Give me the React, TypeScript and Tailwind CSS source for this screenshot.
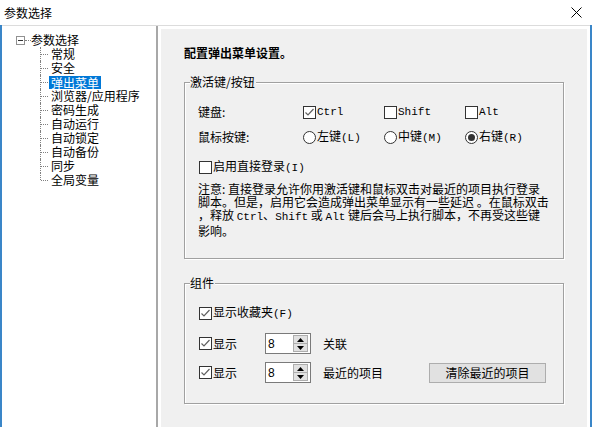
import React from "react";

const TREE_ITEMS = [
  "常规",
  "安全",
  "弹出菜单",
  "浏览器/应用程序",
  "密码生成",
  "自动运行",
  "自动锁定",
  "自动备份",
  "同步",
  "全局变量",
];

const MONO = "font-['Liberation_Mono'] text-[11px]";

function Check({ checked }: { checked?: boolean }) {
  return (
    <span className="flex h-[13px] w-[13px] shrink-0 items-center justify-center border border-[#333333] bg-white">
      {checked && (
        <svg width="11" height="11" viewBox="0 0 11 11">
          <path d="M1.5 5.5 L4 8 L9.5 2" stroke="#606060" strokeWidth="1.2" fill="none" />
        </svg>
      )}
    </span>
  );
}

function Radio({ on }: { on?: boolean }) {
  return (
    <span className="flex h-[13px] w-[13px] shrink-0 items-center justify-center rounded-full border border-[#333333] bg-white">
      {on && <span className="h-[7px] w-[7px] rounded-full bg-[#333333]" />}
    </span>
  );
}

function Spin({ value }: { value: string }) {
  return (
    <div className="flex h-[21px] w-[46px] items-center border border-[#7a7a7a] bg-white">
      <span className="flex-1 pl-[2px] font-['Liberation_Sans'] text-[12px] leading-[14px]">{value}</span>
      <div className="mr-[2px] flex h-[17px] w-[15px] flex-col">
        <div className="flex flex-1 items-center justify-center border border-[#adadad] bg-[#e1e1e1]">
          <svg width="7" height="4" viewBox="0 0 7 4">
            <path d="M0 4 L3.5 0 L7 4 Z" fill="#000" />
          </svg>
        </div>
        <div className="flex flex-1 items-center justify-center border border-t-0 border-[#adadad] bg-[#e1e1e1]">
          <svg width="7" height="4" viewBox="0 0 7 4">
            <path d="M0 0 L3.5 4 L7 0 Z" fill="#000" />
          </svg>
        </div>
      </div>
    </div>
  );
}

function Tree() {
  return (
    <div className="w-[156px] shrink-0 border-r-2 border-[#a8a8a8] bg-white pl-[14px] pt-[7px]">
      <div className="flex h-[14px] items-center">
        <span className="flex h-[9px] w-[9px] items-center justify-center border border-[#919191] bg-white">
          <span className="h-px w-[5px] bg-[#333]" />
        </span>
        <span className="w-[6px] border-t border-dotted border-[#808080]" />
        <span className="text-[12px] leading-[14px]">参数选择</span>
      </div>
      <div className="ml-[24px]">
        {TREE_ITEMS.map((t, i) => {
          const last = i === TREE_ITEMS.length - 1;
          return (
            <div key={t} className="flex h-[14px] items-center">
              <div className="relative h-[14px] w-[9px] shrink-0">
                <span
                  className={
                    last
                      ? "absolute left-0 top-0 h-[7px] border-l border-dotted border-[#808080]"
                      : "absolute left-0 top-0 h-[14px] border-l border-dotted border-[#808080]"
                  }
                />
                <span className="absolute left-[1px] top-[7px] w-[7px] border-t border-dotted border-[#808080]" />
              </div>
              <span
                className={
                  t === "弹出菜单"
                    ? "bg-[#0078d7] px-[2px] text-[12px] leading-[13px] text-white"
                    : "px-[2px] text-[12px] leading-[14px]"
                }
              >
                {t}
              </span>
            </div>
          );
        })}
      </div>
    </div>
  );
}

function GroupBox({ title, className, children }: { title: string; className: string; children: React.ReactNode }) {
  return (
    <div className={"relative border border-[#a0a0a0] shadow-[inset_1px_1px_0_#ffffff,1px_1px_0_#ffffff] " + className}>
      <span className="absolute -top-[8px] left-[5px] bg-[#f0f0f0] pr-[1px] text-[12px] leading-[14px]">{title}</span>
      {children}
    </div>
  );
}

export default function App() {
  return (
    <div className="h-[444px] w-[592px] overflow-hidden bg-white font-['Noto_Sans_CJK_SC',sans-serif] text-black">
      {/* title bar */}
      <div className="flex h-[25px] items-center justify-between pl-[4px] pr-[10px]">
        <span className="text-[12px] leading-[14px]">参数选择</span>
        <svg width="11" height="11" viewBox="0 0 11 11">
          <path d="M0.5 0.5 L10.5 10.5 M10.5 0.5 L0.5 10.5" stroke="#000" strokeWidth="1" />
        </svg>
      </div>

      <div className="flex h-[402px] flex-col border-x-2 border-[#3a86c8]">
        <div className="flex flex-1 border-t border-[#dcdcdc]">
          <Tree />
          <div className="ml-[3px] mt-[3px] flex w-[426px] flex-col bg-[#f0f0f0] px-[23px] pt-[17px]">
            <div className="text-[12px] font-bold leading-[14px]">配置弹出菜单设置。</div>

            <GroupBox title="激活键/按钮" className="mt-[22px] h-[177px] pl-[13px] pt-[22px]">
              <div className="flex h-[14px] items-center text-[12px] leading-[14px]">
                <span className="w-[105px]">键盘:</span>
                <span className="flex w-[81px] items-center">
                  <Check checked />
                  <span className={"ml-px " + MONO}>Ctrl</span>
                </span>
                <span className="flex w-[81px] items-center">
                  <Check />
                  <span className={"ml-px " + MONO}>Shift</span>
                </span>
                <span className="flex w-[81px] items-center">
                  <Check />
                  <span className={"ml-px " + MONO}>Alt</span>
                </span>
              </div>
              <div className="mt-[11px] flex h-[14px] items-center text-[12px] leading-[14px]">
                <span className="w-[105px]">鼠标按键:</span>
                <span className="flex w-[81px] items-center">
                  <Radio />
                  <span className="ml-px">左键<span className={MONO}>(L)</span></span>
                </span>
                <span className="flex w-[81px] items-center">
                  <Radio />
                  <span className="ml-px">中键<span className={MONO}>(M)</span></span>
                </span>
                <span className="flex w-[81px] items-center">
                  <Radio on />
                  <span className="ml-px">右键<span className={MONO}>(R)</span></span>
                </span>
              </div>
              <div className="ml-px mt-[16px] flex h-[14px] items-center text-[12px] leading-[14px]">
                <Check />
                <span className="ml-px">启用直接登录<span className={MONO}>(I)</span></span>
              </div>
              <div className="mt-[8px] text-[12px] leading-[13px]">
                <div className="whitespace-pre">注意: 直接登录允许你用激活键和鼠标双击对最近的项目执行登录</div>
                <div className="whitespace-pre">脚本。但是，启用它会造成弹出菜单显示有一些延迟 。在鼠标双击</div>
                <div className="whitespace-pre">
                  ，释放 <span className={MONO}>Ctrl</span>、<span className={MONO}>Shift</span> 或{" "}
                  <span className={MONO}>Alt</span> 键后会马上执行脚本，不再受这些键
                </div>
                <div className="whitespace-pre">影响。</div>
              </div>
            </GroupBox>

            <GroupBox title="组件" className="mt-[24px] h-[121px] pl-[14px] pt-[22px]">
              <div className="flex h-[14px] items-center text-[12px] leading-[14px]">
                <Check checked />
                <span className="ml-px">显示收藏夹<span className={MONO}>(F)</span></span>
              </div>
              <div className="mt-[13px] flex h-[21px] items-center text-[12px] leading-[14px]">
                <span className="flex w-[66px] items-center">
                  <Check checked />
                  <span className="ml-px">显示</span>
                </span>
                <Spin value="8" />
                <span className="ml-[12px]">关联</span>
              </div>
              <div className="mt-[8px] flex h-[21px] items-center text-[12px] leading-[14px]">
                <span className="flex w-[66px] items-center">
                  <Check checked />
                  <span className="ml-px">显示</span>
                </span>
                <Spin value="8" />
                <span className="ml-[12px] w-[106px]">最近的项目</span>
                <button className="flex h-[20px] w-[117px] items-center justify-center border border-[#adadad] bg-[#e1e1e1] text-[12px] leading-[14px]">
                  清除最近的项目
                </button>
              </div>
            </GroupBox>
          </div>
        </div>
      </div>
    </div>
  );
}
